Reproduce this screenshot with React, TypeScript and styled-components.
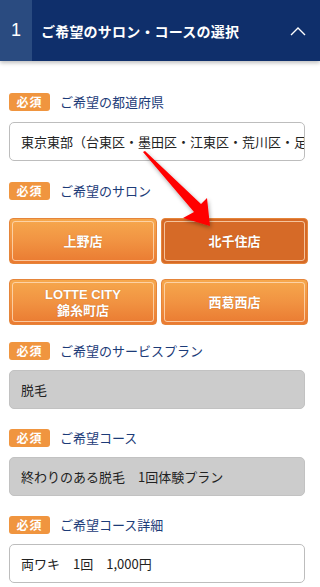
import React from "react";
import styled, { createGlobalStyle } from "styled-components";

const Global = createGlobalStyle`
  html, body { margin: 0; padding: 0; background: #fff; }
  body { font-family: "Noto Sans CJK JP", "Noto Sans", sans-serif; }
  * { box-sizing: border-box; }
`;

const Page = styled.div`
  position: relative;
  width: 320px;
  min-height: 587px;
  overflow: hidden;
`;

const Header = styled.div`
  display: flex;
  height: 61px;
  background: #0f2f6b;
  box-shadow: 0 2px 4px rgba(0, 0, 0, 0.25);
  color: #fff;
`;

const StepNum = styled.div`
  width: 32px;
  display: flex;
  align-items: center;
  justify-content: center;
  background: #2a4b80;
  font-family: "Liberation Sans", Arial, sans-serif;
  font-size: 18px;
`;

const Title = styled.div`
  flex: 1;
  display: flex;
  align-items: center;
  padding-left: 9px;
  font-size: 14px;
  font-weight: 700;
  letter-spacing: 0.2px;
`;

const Chevron = styled.div`
  width: 40px;
  display: flex;
  align-items: center;
  justify-content: center;
  padding-right: 4px;
`;

const Body = styled.div`
  padding: 32px 15px 0 9px;
`;

const Field = styled.div<{ $gap?: number }>`
  margin-bottom: ${(p) => p.$gap ?? 21}px;
`;

const LabelRow = styled.div<{ $gap?: number }>`
  display: flex;
  align-items: center;
  gap: 10px;
  height: 18px;
  margin-bottom: ${(p) => p.$gap ?? 11}px;
`;

const Badge = styled.span`
  display: inline-flex;
  align-items: center;
  justify-content: center;
  width: 41px;
  height: 18px;
  line-height: 18px;
  border-radius: 3px;
  background: #f0953f;
  color: #fff;
  font-size: 12px;
  font-weight: 700;
  letter-spacing: 1px;
`;

const LabelText = styled.span`
  color: #1c3b78;
  font-size: 13px;
  line-height: 18px;
`;

const Box = styled.div<{ $disabled?: boolean }>`
  height: 39px;
  display: flex;
  align-items: center;
  padding-left: 11px;
  border: 1px solid ${(p) => (p.$disabled ? "#c2c2c2" : "#bdbdbd")};
  border-radius: 5px;
  background: ${(p) => (p.$disabled ? "#cccccc" : "#fff")};
  color: #222;
  font-size: 13px;
  line-height: 18px;
  white-space: nowrap;
  overflow: hidden;
`;

const Grid = styled.div`
  display: grid;
  grid-template-columns: 148px 147px;
  grid-auto-rows: 46px;
  column-gap: 4px;
  row-gap: 15px;
  width: 299px;
`;

const SalonButton = styled.div<{ $active?: boolean }>`
  position: relative;
  display: flex;
  align-items: center;
  justify-content: center;
  text-align: center;
  border-radius: 4px;
  border: 1px solid #e5853a;
  background: ${(p) =>
    p.$active
      ? "#d66a27"
      : "linear-gradient(to bottom, #f6a84d 0%, #f19342 50%, #ea7a31 100%)"};
  color: #fff;
  font-size: 13px;
  font-weight: 700;
  line-height: 16px;
  text-shadow: 0 0 1px rgba(120, 50, 0, 0.4);
  &::after {
    content: "";
    position: absolute;
    inset: 2px;
    border: 1px solid rgba(255, 225, 195, 0.75);
    border-radius: 3px;
  }
`;

const Lines = styled.div`
  display: flex;
  flex-direction: column;
  align-items: center;
`;

const LatinLine = styled.span`
  font-family: "Liberation Sans", Arial, sans-serif;
  font-weight: 700;
  font-size: 13px;
  line-height: 15px;
`;

const Arrow = styled.svg`
  position: absolute;
  left: 0;
  top: 0;
  pointer-events: none;
`;

const Required = () => <Badge>必須</Badge>;

export default function App() {
  return (
    <Page>
      <Global />
      <Header>
        <StepNum>1</StepNum>
        <Title>ご希望のサロン・コースの選択</Title>
        <Chevron>
          <svg width="16" height="10" viewBox="0 0 16 10">
            <path d="M1 9 L8 2 L15 9" fill="none" stroke="#fff" strokeWidth="1.4" />
          </svg>
        </Chevron>
      </Header>
      <Body>
        <Field>
          <LabelRow>
            <Required />
            <LabelText>ご希望の都道府県</LabelText>
          </LabelRow>
          <Box>東京東部（台東区・墨田区・江東区・荒川区・足立区）</Box>
        </Field>
        <Field $gap={17}>
          <LabelRow $gap={18}>
            <Required />
            <LabelText>ご希望のサロン</LabelText>
          </LabelRow>
          <Grid>
            <SalonButton>上野店</SalonButton>
            <SalonButton $active>北千住店</SalonButton>
            <SalonButton>
              <Lines>
                <LatinLine>LOTTE CITY</LatinLine>
                <span>錦糸町店</span>
              </Lines>
            </SalonButton>
            <SalonButton>西葛西店</SalonButton>
          </Grid>
        </Field>
        <Field $gap={20}>
          <LabelRow $gap={10}>
            <Required />
            <LabelText>ご希望のサービスプラン</LabelText>
          </LabelRow>
          <Box $disabled>脱毛</Box>
        </Field>
        <Field $gap={20}>
          <LabelRow $gap={10}>
            <Required />
            <LabelText>ご希望コース</LabelText>
          </LabelRow>
          <Box $disabled>終わりのある脱毛　1回体験プラン</Box>
        </Field>
        <Field $gap={0}>
          <LabelRow $gap={10}>
            <Required />
            <LabelText>ご希望コース詳細</LabelText>
          </LabelRow>
          <Box>両ワキ　1回　1,000円</Box>
        </Field>
      </Body>
      <Arrow width="320" height="587" viewBox="0 0 320 587">
        <defs>
          <filter id="sh" x="-20%" y="-20%" width="140%" height="140%">
            <feDropShadow dx="1" dy="2" stdDeviation="2" floodColor="#000" floodOpacity="0.35" />
          </filter>
        </defs>
        <path
          d="M143 152 L145 151 L201 204 L207 198 L210 226 L183 218 L194 212 Z"
          fill="#ff0000"
          filter="url(#sh)"
        />
      </Arrow>
    </Page>
  );
}
